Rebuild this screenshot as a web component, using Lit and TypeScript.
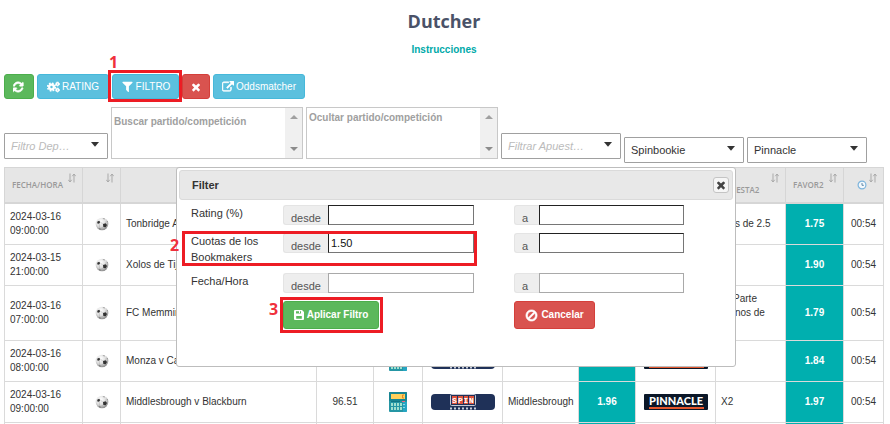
import { LitElement, html, css, svg, nothing } from "lit";
import { customElement, property } from "lit/decorators.js";

const ICONS: Record<string, string> = {
  refresh:
    "M1511 1056q0 5-1 7-64 268-268 434.5t-478 166.5q-146 0-282.5-55t-243.5-157l-129 129q-19 19-45 19t-45-19-19-45v-448q0-26 19-45t45-19h448q26 0 45 19t19 45-19 45l-137 137q71 66 161 102t187 36q134 0 250-65t186-179q11-17 53-117 8-23 30-23h192q13 0 22.5 9.5t9.5 22.5zm25-800v448q0 26-19 45t-45 19h-448q-26 0-45-19t-19-45 19-45l138-138q-148-137-349-137-134 0-250 65t-186 179q-11 17-53 117-8 23-30 23h-199q-13 0-22.5-9.5t-9.5-22.5v-7q65-268 270-434.5t480-166.5q146 0 284 55.5t245 156.5l130-129q19-19 45-19t45 19 19 45z",
  filter:
    "M1595 295q17 41-14 70l-493 493v742q0 42-39 59-13 5-25 5-27 0-45-19l-256-256q-19-19-19-45v-486l-493-493q-31-29-14-70 17-39 59-39h1280q42 0 59 39z",
  times:
    "M1490 1322q0 40-28 68l-136 136q-28 28-68 28t-68-28l-294-294-294 294q-28 28-68 28t-68-28l-136-136q-28-28-28-68t28-68l294-294-294-294q-28-28-28-68t28-68l136-136q28-28 68-28t68 28l294 294 294-294q28-28 68-28t68 28l136 136q28 28 28 68t-28 68l-294 294 294 294q28 28 28 68z",
  external:
    "M1408 928v320q0 119-84.5 203.5t-203.5 84.5h-832q-119 0-203.5-84.5t-84.5-203.5v-832q0-119 84.5-203.5t203.5-84.5h704q14 0 23 9t9 23v64q0 14-9 23t-23 9h-704q-66 0-113 47t-47 113v832q0 66 47 113t113 47h832q66 0 113-47t47-113v-320q0-14 9-23t23-9h64q14 0 23 9t9 23zm384-864v512q0 26-19 45t-45 19-45-19l-176-176-652 652q-10 10-23 10t-23-10l-114-114q-10-10-10-23t10-23l652-652-176-176q-19-19-19-45t19-45 45-19h512q26 0 45 19t19 45z",
  ban: "M1440 893q0-161-87-295l-754 753q137 89 297 89 111 0 211.5-43.5t173.5-116.5 116-174.5 43-212.5zm-999 299l755-754q-135-91-300-91-148 0-273 73t-198 199-73 274q0 162 89 299zm1223-299q0 157-61 300t-163.5 246-245 164-298.5 61-298.5-61-245-164-163.5-246-61-300 61-299.5 163.5-245.5 245-164 298.5-61 298.5 61 245 164 163.5 245.5 61 299.5z",
};

const icon = (name: string, size = 13, heavy = false) => html`<svg
  width=${size} height=${size} viewBox="0 0 1792 1792" fill="currentColor"
  stroke="currentColor" stroke-width=${heavy ? 90 : 0} aria-hidden="true"
>${svg`<path d=${ICONS[name]} />`}</svg>`;

const saveIcon = html`<svg width="10" height="10" viewBox="0 0 10 10" fill="currentColor" fill-rule="evenodd" aria-hidden="true">
  <path d="M1 0H8L10 2V9A1 1 0 0 1 9 10H1A1 1 0 0 1 0 9V1A1 1 0 0 1 1 0zM2 1.200V3.600H7V1.200H6V3H5V1.200zM2.200 6V8.800H7.800V6z" />
</svg>`;

const cogs = html`<svg width="13" height="12" viewBox="0 0 26 24" fill="none" stroke="currentColor" aria-hidden="true">
  <circle cx="9" cy="12" r="4.7" stroke-width="4.6" />
  <circle cx="9" cy="12" r="7.6" stroke-width="3.4" stroke-dasharray="3.4 2.57" />
  <circle cx="21" cy="6" r="2.4" stroke-width="2.8" />
  <circle cx="21" cy="6" r="4" stroke-width="2" stroke-dasharray="2.2 2" />
  <circle cx="21" cy="18" r="2.4" stroke-width="2.8" />
  <circle cx="21" cy="18" r="4" stroke-width="2" stroke-dasharray="2.2 2" />
</svg>`;

const sortIcon = html`<svg class="sort" width="8" height="10" viewBox="0 0 8 10" fill="none" stroke="#a9a9a9" aria-hidden="true">
  <path d="M2 0.5V9M0.3 6.8L2 9L3.7 6.8M6 9.5V1M4.3 3.2L6 1L7.7 3.2" />
</svg>`;

const clock = html`<svg width="10" height="10" viewBox="0 0 10 10" aria-hidden="true">
  <circle cx="5" cy="5" r="3.9" fill="#f4f9fd" stroke="#7db4dc" stroke-width="1.2" />
  <path d="M5 3V5.3H6.8" fill="none" stroke="#5f88a8" />
</svg>`;

const ball = html`<svg width="14" height="14" viewBox="0 0 14 14" role="img" aria-label="Fútbol">
  <defs>
    <radialGradient id="b" cx=".4" cy=".3" r=".7">
      <stop offset="0" stop-color="#fff" /><stop offset=".6" stop-color="#dcdcdc" /><stop offset="1" stop-color="#8d8d8d" />
    </radialGradient>
  </defs>
  <circle cx="7" cy="7" r="6.3" fill="url(#b)" />
  <path d="M8 7l2.700-.7 1.300 1.800-1.200 2.200-2.500-.4zM2.200 4.800l1.900-1 1.100 1.300-1.100 1.600-1.700-.2z" fill="#333" />
  <path d="M7.5 1.2l2.6.5-1 .9zM3.6 11l2 .6.2 1.2-1.5-.6zM12.3 3.5l.8 1.8-.9-.3z" fill="#777" />
  <path d="M5.4 5.2l2.3 1.6M4.2 6.8l.4 4M8.2 9.9l-2.4 1.7M10.6 6l.7-2.1" stroke="#aaa" stroke-width=".5" fill="none" />
</svg>`;

const calculator = html`<svg width="18" height="20" viewBox="0 0 18 20" role="img" aria-label="Calculadora">
  <rect width="18" height="20" rx="1" fill="#2596a4" />
  <path d="M14 10h4v9a1 1 0 0 1-1 1h-3z" fill="#27abcf" opacity=".7" />
  <rect width="18" height="9" rx="1" fill="#188592" />
  <rect x="2" y="2" width="14" height="5" fill="#ffd05b" />
  <path d="M15 3H13.500v3H15" fill="none" stroke="#e0862b" />
  <path d="M2 9.500H11" stroke="#127684" />
  <path d="M13 9.500H16" stroke="#f0647e" />
  <path d="M2 12.500H13M2 16.500H13" stroke="#9fe0cf" stroke-width="3" stroke-dasharray="2 1" />
  <path d="M14 12.500H16M14 15.500H16" stroke="#8bd6ea" />
</svg>`;

const spinLogo = html`<svg width="64" height="16" viewBox="0 0 64 16" role="img" aria-label="Spinbookie">
  <rect width="64" height="16" rx="4" fill="#1f3158" />
  <rect x="19.500" y=".5" width="25" height="11" rx="1" fill="#1f3158" stroke="#c5cad6" />
  <path d="M21 2h5v8h-5zM27 2h5v8h-5zM33 2h4v8h-4zM38 2h5v8h-5z" fill="#e0523c" />
  <g class="spin-text" fill="#fff" text-anchor="middle">
    <text x="23.500" y="9">S</text><text x="29.500" y="9">P</text><text x="35" y="9">I</text><text x="40.500" y="9">N</text>
  </g>
  <path d="M19 14.500H45" stroke="#c9cfdc" stroke-width="2" stroke-dasharray="2 2" />
</svg>`;

const pinnacleLogo = html`<svg width="64" height="16" viewBox="0 0 64 16" role="img" aria-label="Pinnacle">
  <rect width="64" height="16" rx="1" fill="#0b1728" />
  <text class="pinn-text" x="32" y="11" fill="#fff" text-anchor="middle">PINNACLE</text>
  <path d="M5 14H60" stroke="#e4572e" stroke-width="2" />
</svg>`;

interface Match {
  date: string;
  time: string;
  name: string;
  rating: string;
  bet1: string;
  odds1: string;
  bet2: string[];
  odds2: string;
}

const MATCHES: Match[] = [
  { date: "2024-03-16", time: "09:00:00", name: "Tonbridge Angels", rating: "", bet1: "", odds1: "", bet2: ["Más de 2.5"], odds2: "1.75" },
  { date: "2024-03-15", time: "21:00:00", name: "Xolos de Tijuana", rating: "", bet1: "", odds1: "", bet2: [], odds2: "1.90" },
  { date: "2024-03-16", time: "07:00:00", name: "FC Memmingen", rating: "", bet1: "", odds1: "", bet2: ["1ª Parte", "Menos de", "1.5"], odds2: "1.79" },
  { date: "2024-03-16", time: "08:00:00", name: "Monza v Cagliari", rating: "", bet1: "", odds1: "", bet2: [], odds2: "1.84" },
  { date: "2024-03-16", time: "09:00:00", name: "Middlesbrough v Blackburn", rating: "96.51", bet1: "Middlesbrough", odds1: "1.96", bet2: ["X2"], odds2: "1.97" },
];

@customElement("match-table")
export class MatchTable extends LitElement {
  static styles = css`
    :host {
      display: block;
      font: 10px/14px "Liberation Sans", Arial, sans-serif;
      color: #333;
    }
    table {
      width: 100%;
      table-layout: fixed;
      border-collapse: collapse;
    }
    .c-date { width: 78px; }
    .c-sport { width: 38px; }
    .c-rating { width: 57px; }
    .c-calc { width: 49px; }
    .c-book { width: 80px; }
    .c-bet1 { width: 76px; }
    .c-odds1 { width: 57px; }
    .c-bet2 { width: 70px; }
    .c-odds2 { width: 58px; }
    .c-time { width: 40px; }
    th {
      box-sizing: border-box;
      height: 35px;
      padding: 5px 6px 0 7px;
      border: 1px solid #d6d6d6;
      border-bottom: 2px solid #d6d6d6;
      background: #e6e6e6;
      color: #999;
      font: 600 8px/10px "Open Sans", sans-serif;
      text-align: left;
      vertical-align: top;
    }
    .head {
      display: flex;
      justify-content: space-between;
    }
    .label { padding-top: 7px; }
    .low { padding-left: 4px; }
    .low .label { padding-top: 12px; }
    .sort { flex: none; }
    .label svg { display: block; margin-left: 6px; }
    td {
      padding: 6px 4px 6px 5px;
      border: 1px solid #dadada;
    }
    .mid { padding: 0; text-align: center; }
    .mid svg { display: block; margin: 0 auto; }
    .odds {
      padding: 0;
      background: #00afaf;
      color: #fff;
      font-weight: bold;
      text-align: center;
    }
    .time { padding: 0; text-align: center; }
    .line { display: block; }
    .spin-text { font: bold 8px "Liberation Mono", monospace; }
    .pinn-text { font: 900 11px Lato, sans-serif; }
    .next td { height: 28px; }
  `;

  private head(label: unknown, name: string, low = false) {
    return html`<th scope="col" aria-label=${name} class=${low ? "low" : ""}>
      <div class="head"><span class="label">${label}</span>${sortIcon}</div>
    </th>`;
  }

  render() {
    return html`<table>
      <colgroup>
        <col class="c-date" /><col class="c-sport" /><col /><col class="c-rating" /><col class="c-calc" />
        <col class="c-book" /><col class="c-bet1" /><col class="c-odds1" /><col class="c-book" />
        <col class="c-bet2" /><col class="c-odds2" /><col class="c-time" />
      </colgroup>
      <thead>
        <tr>
          ${this.head("FECHA/HORA", "Fecha/Hora")} ${this.head("", "Deporte")} ${this.head("", "Partido")}
          ${this.head("", "Rating")} ${this.head("", "Calculadora")} ${this.head("", "Bookmaker 1")}
          ${this.head("", "Apuesta 1")} ${this.head("", "Favor 1")} ${this.head("", "Bookmaker 2")}
          ${this.head("APUESTA2", "Apuesta 2", true)} ${this.head("FAVOR2", "Favor 2")} ${this.head(clock, "Actualizado")}
        </tr>
      </thead>
      <tbody>
        ${MATCHES.map(
          (m) => html`<tr>
            <td>${m.date}<br />${m.time}</td>
            <td class="mid">${ball}</td>
            <td>${m.name}</td>
            <td class="mid">${m.rating}</td>
            <td class="mid">${calculator}</td>
            <td class="mid">${spinLogo}</td>
            <td>${m.bet1}</td>
            <td class="odds">${m.odds1}</td>
            <td class="mid">${pinnacleLogo}</td>
            <td>${m.bet2.map((part) => html`<span class="line">${part}</span>`)}</td>
            <td class="odds">${m.odds2}</td>
            <td class="time">00:54</td>
          </tr>`
        )}
        <tr class="next">
          <td></td><td></td><td></td><td></td><td></td><td></td><td></td>
          <td class="odds"></td><td></td><td></td><td class="odds"></td><td></td>
        </tr>
      </tbody>
    </table>`;
  }
}

const buttonStyles = css`
  button {
    display: inline-flex;
    align-items: center;
    justify-content: center;
    gap: 2px;
    box-sizing: border-box;
    margin: 0;
    padding: 0;
    border: 1px solid;
    border-radius: 3px;
    color: #fff;
    font: 10px/14px "Liberation Sans", Arial, sans-serif;
  }
  .green { background: #5cb85c; border-color: #4cae4c; }
  .blue { background: #5bc0de; border-color: #46b8da; }
  .red { background: #d9534f; border-color: #d43f3a; }
  .marked { position: relative; display: flex; }
  .frame {
    position: absolute;
    border: 3px solid #ed1c24;
    pointer-events: none;
  }
  .num {
    position: absolute;
    color: #f0303c;
    font: bold 16px/16px "Open Sans", sans-serif;
  }
`;

@customElement("filter-dialog")
export class FilterDialog extends LitElement {
  static styles = [
    buttonStyles,
    css`
      :host {
        display: block;
        box-sizing: border-box;
        width: 560px;
        height: 200px;
        padding: 2px;
        border: 1px solid #bdbdbd;
        border-radius: 3px;
        background: #fff;
        color: #333;
        font: 11px/16px "Liberation Sans", Arial, sans-serif;
      }
      header {
        display: flex;
        align-items: center;
        justify-content: space-between;
        box-sizing: border-box;
        height: 30px;
        padding: 0 3px 0 12px;
        border: 1px solid #dadada;
        border-radius: 3px;
        background: #e8e8e8;
      }
      h2 { margin: 0; font: inherit; font-weight: bold; }
      .close {
        width: 16px;
        height: 16px;
        border-color: #c4c4c4;
        background: #f6f6f6;
        color: #444;
      }
      form {
        display: flex;
        flex-direction: column;
        gap: 8px;
        padding: 5px 12px 0;
      }
      .row {
        position: relative;
        display: grid;
        grid-template-columns: 92px 191px 40px 170px;
        align-items: start;
      }
      .to { grid-column: 4; }
      .group { display: flex; height: 20px; }
      .addon {
        box-sizing: border-box;
        width: 45px;
        padding: 4px 0 0 7px;
        border: 1px solid #e4e4e4;
        border-right: 0;
        border-radius: 3px 0 0 3px;
        background: #eee;
        color: #555;
        line-height: 16px;
      }
      .short { width: 25px; }
      input {
        flex: 1;
        min-width: 0;
        box-sizing: border-box;
        margin: 0;
        padding: 0 2px;
        border: 1px solid #767676;
        border-top-color: #222;
        border-left-color: #222;
        border-radius: 0;
        background: #fff;
        color: #111;
        font: inherit;
      }
      .soft { border-color: #a9a9a9; }
      .actions .group { height: 28px; }
      .actions button { height: 28px; gap: 3px; font-weight: bold; }
      .apply { width: 96px; }
      .cancel { width: 81px; }
      .frame-row { inset: -2px 244px -1px -9px; }
      .num-2 { left: -21px; top: 4px; }
      .frame-btn { inset: -4px -4px -4px -3px; }
      .num-3 { left: -14px; top: 0; }
    `,
  ];

  private row(id: string, label: string, value = "", soft = false, mark: unknown = nothing) {
    return html`<div class="row">
      <label for=${id}>${label}</label>
      <div class="group">
        <span class="addon">desde</span><input id=${id} class=${soft ? "soft" : ""} type="text" .value=${value} />
      </div>
      <div class="group to">
        <span class="addon short">a</span><input aria-label="${label} a" class=${soft ? "soft" : ""} type="text" />
      </div>
      ${mark}
    </div>`;
  }

  render() {
    return html`
      <header>
        <h2>Filter</h2>
        <button class="close" type="button" aria-label="Cerrar">${icon("times", 12)}</button>
      </header>
      <form>
        ${this.row("rating", "Rating (%)")}
        ${this.row("odds", "Cuotas de los Bookmakers", "1.50", false,
          html`<span class="frame frame-row"></span><span class="num num-2">2</span>`)}
        ${this.row("date", "Fecha/Hora", "", true)}
        <div class="row actions">
          <span></span>
          <div class="group">
            <div class="marked">
              <button class="green apply" type="button">${saveIcon}Aplicar Filtro</button>
              <span class="frame frame-btn"></span><span class="num num-3">3</span>
            </div>
          </div>
          <div class="group to"><button class="red cancel" type="button">${icon("ban", 13, true)}Cancelar</button></div>
        </div>
      </form>
    `;
  }
}

@customElement("drop-down")
export class DropDown extends LitElement {
  @property() text = "";
  @property() name = "";
  @property({ type: Boolean, reflect: true }) hint = false;

  static styles = css`
    :host { display: block; position: relative; height: 26px; }
    select {
      appearance: none;
      width: 100%;
      height: 100%;
      box-sizing: border-box;
      margin: 0;
      padding: 0 20px 0 6px;
      border: 1px solid #a0a0a0;
      border-radius: 1px;
      background: #fff;
      color: #333;
      font: 11px/16px "Liberation Sans", Arial, sans-serif;
    }
    :host([hint]) select { color: #bbb; font-style: italic; }
    svg { position: absolute; right: 9px; top: 9px; pointer-events: none; }
  `;

  render() {
    return html`<select aria-label=${this.name}><option>${this.text}</option></select>
      <svg width="8" height="5" viewBox="0 0 8 5" aria-hidden="true"><path d="M0 0H8L4 4.800z" fill="#333" /></svg>`;
  }
}

@customElement("app-root")
export class AppRoot extends LitElement {
  static styles = [
    buttonStyles,
    css`
      :host {
        display: block;
        max-height: 100vh;
        overflow: hidden;
        box-sizing: border-box;
        padding: 9px 6px 0 4px;
        background: #fff;
        font: 11px/16px "Liberation Sans", Arial, sans-serif;
      }
      h1 {
        margin: 0;
        color: #4a5268;
        text-align: center;
        font: bold 18px/24px "Open Sans", sans-serif;
      }
      .help {
        margin: 9px 0 16px;
        text-align: center;
        font-size: 10px;
        font-weight: bold;
      }
      a { color: #00a9a9; text-decoration: none; }
      .toolbar { display: flex; gap: 3px; }
      .toolbar button { height: 25px; }
      .w-refresh { width: 30px; }
      .w-rating { width: 72px; }
      .w-filter { width: 67px; }
      .w-clear { width: 28px; }
      .w-odds { width: 92px; }
      .frame-btn { inset: -4px -3px -3px -4px; }
      .num-1 { left: -3px; top: -20px; }
      .filters {
        display: flex;
        align-items: flex-end;
        gap: 3px;
        margin: 8px 0 4px;
      }
      .raised { margin-bottom: 4px; }
      .w104 { width: 104px; }
      .w120 { width: 120px; }
      .box {
        display: flex;
        box-sizing: border-box;
        width: 192px;
        height: 52px;
        border: 1px solid #c8c8c8;
      }
      textarea {
        flex: 1;
        min-width: 0;
        margin: 0;
        padding: 6px 2px;
        border: 0;
        resize: none;
        overflow: hidden;
        background: #fff;
        font: bold 10px/16px "Liberation Sans", Arial, sans-serif;
      }
      textarea::placeholder { color: #a0a0a0; opacity: 1; }
      .upper { padding-top: 2px; }
      .scroll {
        display: flex;
        flex-direction: column;
        align-items: center;
        justify-content: space-between;
        width: 17px;
        box-sizing: border-box;
        padding: 7px 0;
        background: #f0f0f0;
      }
      .results { position: relative; }
      filter-dialog { position: absolute; left: 172px; top: 0; }
    `,
  ];

  private box(text: string, upper = false) {
    return html`<div class="box raised">
      <textarea class=${upper ? "upper" : ""} placeholder=${text} aria-label=${text}></textarea>
      <div class="scroll" aria-hidden="true">
        <svg width="8" height="4" viewBox="0 0 8 4"><path d="M0 4L4 0L8 4z" fill="#a0a0a0" /></svg>
        <svg width="8" height="4" viewBox="0 0 8 4"><path d="M0 0L4 4L8 0z" fill="#8c8c8c" /></svg>
      </div>
    </div>`;
  }

  render() {
    return html`
      <h1>Dutcher</h1>
      <div class="help"><a href="#instrucciones">Instrucciones</a></div>
      <div class="toolbar">
        <button class="green w-refresh" aria-label="Actualizar">${icon("refresh", 12, true)}</button>
        <button class="blue w-rating">${cogs}RATING</button>
        <div class="marked">
          <button class="blue w-filter">${icon("filter", 13)}FILTRO</button>
          <span class="frame frame-btn"></span><span class="num num-1">1</span>
        </div>
        <button class="red w-clear" aria-label="Borrar filtro">${icon("times", 12)}</button>
        <button class="blue w-odds">${icon("external", 12, true)}Oddsmatcher</button>
      </div>
      <div class="filters">
        <drop-down class="raised w104" hint text="Filtro Dep…" name="Filtro deporte"></drop-down>
        ${this.box("Buscar partido/competición")} ${this.box("Ocultar partido/competición", true)}
        <drop-down class="raised w120" hint text="Filtrar Apuest…" name="Filtrar apuesta"></drop-down>
        <drop-down class="w120" text="Spinbookie" name="Bookmaker 1"></drop-down>
        <drop-down class="w120" text="Pinnacle" name="Bookmaker 2"></drop-down>
      </div>
      <div class="results">
        <match-table></match-table>
        <filter-dialog role="dialog" aria-label="Filter"></filter-dialog>
      </div>
    `;
  }
}
